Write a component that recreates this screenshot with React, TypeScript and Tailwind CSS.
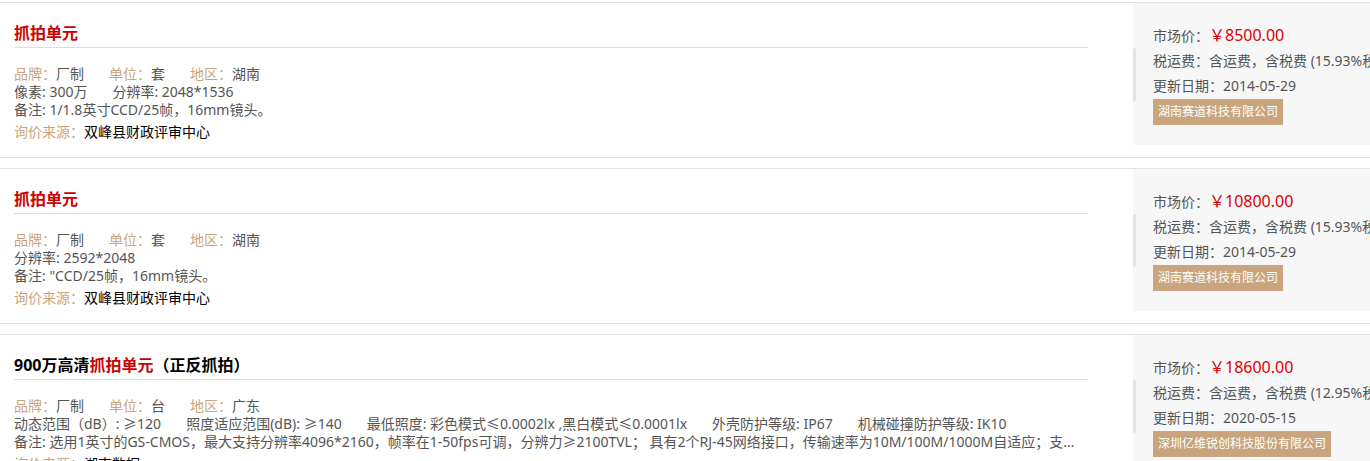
const font = "font-['Noto_Sans','Noto_Sans_CJK_SC',sans-serif]";

type Item = {
  title: React.ReactNode;
  unit: string;
  region: string;
  specs: string[];
  note: string;
  source: string;
  price: string;
  tax: string;
  date: string;
  company: string;
};

const items: Item[] = [
  {
    title: <span className="text-[#cc0000]">抓拍单元</span>,
    unit: "套",
    region: "湖南",
    specs: ["像素: 300万", "分辨率: 2048*1536"],
    note: "备注: 1/1.8英寸CCD/25帧，16mm镜头。",
    source: "双峰县财政评审中心",
    price: "￥8500.00",
    tax: "税运费：含运费，含税费 (15.93%税率)",
    date: "2014-05-29",
    company: "湖南赛道科技有限公司",
  },
  {
    title: <span className="text-[#cc0000]">抓拍单元</span>,
    unit: "套",
    region: "湖南",
    specs: ["分辨率: 2592*2048"],
    note: "备注: \"CCD/25帧，16mm镜头。",
    source: "双峰县财政评审中心",
    price: "￥10800.00",
    tax: "税运费：含运费，含税费 (15.93%税率)",
    date: "2014-05-29",
    company: "湖南赛道科技有限公司",
  },
  {
    title: (
      <>
        <span className="text-black">900万高清</span>
        <span className="text-[#cc0000]">抓拍单元</span>
        <span className="text-black">（正反抓拍）</span>
      </>
    ),
    unit: "台",
    region: "广东",
    specs: [
      "动态范围（dB）: ≥120",
      "照度适应范围(dB): ≥140",
      "最低照度: 彩色模式≤0.0002lx ,黑白模式≤0.0001lx",
      "外壳防护等级: IP67",
      "机械碰撞防护等级: IK10",
    ],
    note: "备注: 选用1英寸的GS-CMOS，最大支持分辨率4096*2160，帧率在1-50fps可调，分辨力≥2100TVL； 具有2个RJ-45网络接口，传输速率为10M/100M/1000M自适应；支持车牌识别、车身颜色识别、车型识别等功能",
    source: "湖南数据",
    price: "￥18600.00",
    tax: "税运费：含运费，含税费 (12.95%税率)",
    date: "2020-05-15",
    company: "深圳亿维锐创科技股份有限公司",
  },
];

function PriceCard({ item }: { item: Item }) {
  return (
    <div className="relative w-[260px] h-[142px] flex-none bg-[#f7f7f7] pl-[20px] pt-[20px] text-[14px] leading-[25px] text-[#555] whitespace-nowrap">
      {/* little grip on the left edge */}
      <div className="absolute left-0 top-[45px] w-[3px] h-[53px] rounded bg-[#e3e3e3]" />
      <div>
        市场价：<span className="text-[16px] text-[#dd0000]">{item.price}</span>
      </div>
      <div>{item.tax}</div>
      <div>更新日期：{item.date}</div>
      <div className="inline-block mt-[1px] bg-[#c9a57d] px-[5px] text-[12px] leading-[26px] text-white">
        {item.company}
      </div>
    </div>
  );
}

function Row({ item }: { item: Item }) {
  return (
    <div className="flex h-[156px] flex-none border-y border-[#e2e2e2] bg-white">
      <div className="ml-[14px] w-[1074px] flex-none pt-[18px]">
        <h3 className="border-b border-[#dedede] pb-[2px] text-[16px] font-bold leading-[24px]">
          {item.title}
        </h3>
        <div className="mt-[17px] text-[14px] leading-[18px] text-[#555]">
          <div className="whitespace-nowrap">
            <span className="mr-[25px]">
              <span className="text-[#c9a57d]">品牌：</span>厂制
            </span>
            <span className="mr-[25px]">
              <span className="text-[#c9a57d]">单位：</span>
              {item.unit}
            </span>
            <span>
              <span className="text-[#c9a57d]">地区：</span>
              {item.region}
            </span>
          </div>
          <div className="whitespace-nowrap">
            {item.specs.map((s, i) => (
              <span key={i} className="mr-[25px]">
                {s}
              </span>
            ))}
          </div>
          <div className="truncate">{item.note}</div>
          <div className="mt-[2px] leading-[22px]">
            <span className="text-[#c9a57d]">询价来源：</span>
            <span className="text-black">{item.source}</span>
          </div>
        </div>
      </div>
      <div className="ml-[45px]">
        <PriceCard item={item} />
      </div>
    </div>
  );
}

export default function App() {
  return (
    <div className={`${font} h-[461px] w-full overflow-hidden bg-white pt-[2px]`}>
      <div className="flex flex-col gap-[10px]">
        {items.map((item, i) => (
          <Row key={i} item={item} />
        ))}
      </div>
    </div>
  );
}
